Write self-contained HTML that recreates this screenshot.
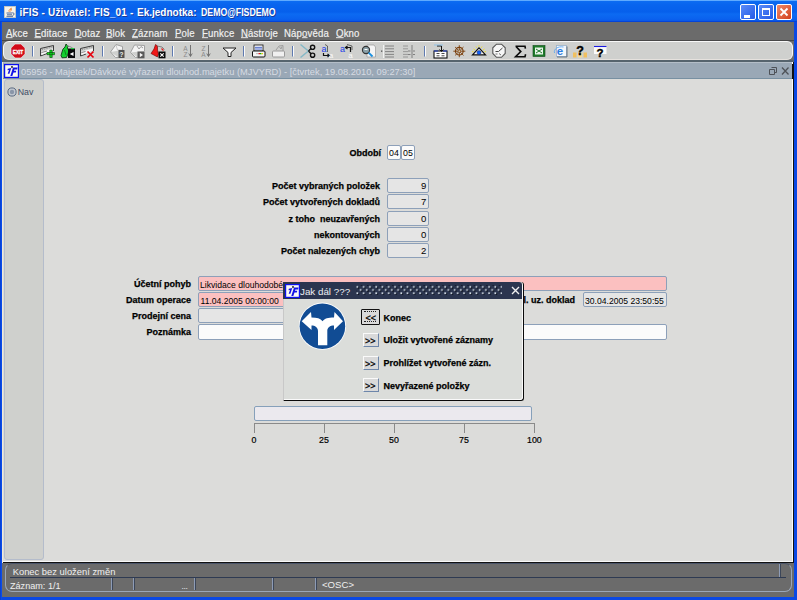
<!DOCTYPE html>
<html><head><meta charset="utf-8">
<style>
*{margin:0;padding:0;box-sizing:border-box}
html,body{width:797px;height:600px;overflow:hidden;background:linear-gradient(90deg,#0636b8 0,#0b4ef0 1px,#0a48e4 2px);font-family:"Liberation Sans",sans-serif}
.a{position:absolute}
.t{position:absolute;white-space:nowrap;line-height:1}
#title{left:0;top:0;width:797px;height:22px;background:linear-gradient(#5eaaff 0,#5eaaff 1px,#0c6cf2 1px,#0864ee 5px,#0660ec 12px,#0c6af2 14px,#0a62ee 19px,#0a5aea 20.5px,#0444d8 21px,#0444d8 22px)}
.ttext{left:19.5px;top:8px;font-size:10px;font-weight:bold;color:#fff;text-shadow:1px 1px 0 #1a3a9a}
.wb{position:absolute;top:4px;width:16px;height:16px;border:1px solid #fff;border-radius:2px}
#menubar{left:2px;top:22px;width:792px;height:19px;background:#6b6b6b}
.mi{position:absolute;top:28px;transform:scaleY(1.13);transform-origin:0 0;font-size:9.6px;color:#f2f2f2;-webkit-text-stroke:0.15px #f2f2f2;white-space:nowrap;line-height:1;letter-spacing:0.15px}
.mi u{text-decoration-thickness:1px;text-underline-offset:0px;text-decoration-color:#d8d8d8}
#tbback{left:2px;top:40px;width:792px;height:22px;background:linear-gradient(#484848 0,#484848 1px,#6b6b6b 1px,#6b6b6b 20px,#56646e 20px)}
#tb{left:3px;top:41px;width:790px;height:19px;background:#cfd0ce;border:1px solid #f8f8f8;border-bottom-color:#e6e2de;border-radius:6px}
#mdit{left:3px;top:62px;width:789px;height:17px;background:#9aa8b6;border-top:1px solid #b4bec8;border-bottom:1px solid #7890a2}
#mditr{left:792px;top:62px;width:1px;height:2px;background:#fff}
#mditext{left:21px;top:68px;font-size:9.3px;color:#d6dbe3}
#mdiwin{left:2px;top:62px;width:792px;height:501px;background:#111;border-left:1px solid #efe9d8}
#content{left:3px;top:79px;width:790px;height:483px;background:#dcdcda;border-right:1px solid #fbfbfb;border-bottom:1px solid #f8f8f8}
#nav{left:4px;top:79px;width:40px;height:481px;background:#cfd0cd;border:1px solid #b4bccb;border-radius:3px}
#status{left:2px;top:563px;width:792px;height:34px;background:#6b6b6b}
#sinner{left:5px;top:563px;width:787px;height:29px;border:1px solid #9aa6b8;border-top-color:#4a5468;border-radius:7px}
.lbl{position:absolute;font-size:9px;font-weight:bold;color:#000;-webkit-text-stroke:0.25px #000;white-space:nowrap;line-height:1}
.fld{position:absolute;border:1px solid #8da0b9;background:#e5e5e5;border-radius:2px}
.ft{position:absolute;font-size:8.6px;color:#000;white-space:nowrap;line-height:1}
.pink{background:#fbc0c0}
.white{background:#fbfbfb}
.btn{position:absolute;left:363px;width:16px;height:14px;background:#d9d9d9;border:1px solid;border-color:#fafafa #6d86aa #6d86aa #fafafa}
.bt{position:absolute;font-size:9px;font-weight:bold;color:#000;-webkit-text-stroke:0.25px #000;white-space:nowrap;line-height:1}
.sep{position:absolute;top:46px;width:2px;height:12px;border-left:1px solid #6e8ab8;border-right:1px solid #fff}
</style></head><body>
<div id="title" class="a"></div>
<svg class="a" style="left:4px;top:5.5px" width="12" height="12" viewBox="0 0 12 12"><rect x="0.3" y="0.3" width="11.4" height="11.4" fill="#f6f3ea" stroke="#cfc6b0" stroke-width="0.6"/><path d="M4.5,5.5 C4,4 6,3 7.5,1.5 C7.5,3 8.5,4 6.5,5.5 Z" fill="#f07a20"/><circle cx="6" cy="4.3" r="0.7" fill="#fff"/><path d="M2.5,7 h6 M3,8.8 h5 M2.5,10.3 h6.5" stroke="#3a5a90" stroke-width="0.9"/><path d="M8.6,6.5 C10.5,6.5 10.5,9.5 8.6,9.5" fill="none" stroke="#3a5a90" stroke-width="0.8"/></svg>
<div class="t ttext" style="letter-spacing:0.18px">iFIS - Uživatel: FIS_01 -</div><div class="t ttext" style="left:137px">Ek.jednotka:</div><div class="t ttext" style="left:200.5px;transform:scaleX(0.875);transform-origin:0 0">DEMO@FISDEMO</div>
<div class="wb" style="left:740px;background:linear-gradient(135deg,#5a8cf8,#2459e6)"><div class="a" style="left:3px;top:10px;width:6px;height:3px;background:#fff"></div></div>
<div class="wb" style="left:758px;background:linear-gradient(135deg,#5a8cf8,#2459e6)"><div class="a" style="left:3px;top:3px;width:8px;height:8px;border:1px solid #fff;border-top-width:2px"></div></div>
<div class="wb" style="left:776px;background:linear-gradient(135deg,#f08a6a,#d2401c)"><svg class="a" style="left:2px;top:2px" width="10" height="10"><path d="M1.5 1.5L8.5 8.5M8.5 1.5L1.5 8.5" stroke="#fff" stroke-width="1.8"/></svg></div>
<div id="menubar" class="a"></div>
<span class="mi" style="left:6px"><u>A</u>kce</span>
<span class="mi" style="left:34.5px"><u>E</u>ditace</span>
<span class="mi" style="left:74.5px"><u>D</u>otaz</span>
<span class="mi" style="left:106px"><u>B</u>lok</span>
<span class="mi" style="left:132px"><u>Z</u>áznam</span>
<span class="mi" style="left:175px"><u>P</u>ole</span>
<span class="mi" style="left:202px"><u>F</u>unkce</span>
<span class="mi" style="left:241px"><u>N</u>ástroje</span>
<span class="mi" style="left:284px">Náp<u>o</u>věda</span>
<span class="mi" style="left:336px"><u>O</u>kno</span>
<div id="tbback" class="a"></div>
<div id="tb" class="a"></div>
<svg class="a" style="left:0;top:0" width="797" height="62" viewBox="0 0 797 62">
<defs>
<g id="grid"><path d="M0.5,4.5 L13.5,0.5 L13.5,7 L0.5,11 Z" fill="#ececec" stroke="#4a4a4a" stroke-width="0.9"/><path d="M1,7.8 L13,4" stroke="#6a6a6a" stroke-width="0.8"/><path d="M4,3.5 L4,10 M8,2.3 L8,8.8" stroke="#9a9a9a" stroke-width="0.6"/></g>
<g id="sep"><rect x="0" y="0" width="1" height="10.5" fill="#5f7ab0"/><rect x="1" y="0" width="1" height="10.5" fill="#fafafa"/></g>
</defs>
<!-- EXIT -->
<polygon points="15.1,44 20.9,44 25,48.1 25,53.9 20.9,58 15.1,58 11,53.9 11,48.1" fill="#d20a18" stroke="#f0f4f4" stroke-width="0.6"/>
<text x="18" y="53.6" font-family="Liberation Sans" font-weight="bold" font-size="5.8" fill="#fff" stroke="#fff" stroke-width="0.3" text-anchor="middle" textLength="10.5" lengthAdjust="spacingAndGlyphs">EXIT</text>
<use href="#sep" x="32" y="46"/>
<!-- insert -->
<path d="M40.5,48.5 L53.5,45.5 L53.5,51 M40.5,48.5 L40.5,56 L47,53.5" fill="none" stroke="#3c3c3c" stroke-width="1"/>
<path d="M41.5,51.5 L53,48.5 L53,50.5 L41.5,55 Z" fill="#f6f6f6"/>
<path d="M41.5,49.8 L52.5,47" stroke="#8a8a8a" stroke-width="0.8" stroke-dasharray="1.5 1"/>
<path d="M41.5,52.5 L47,51" stroke="#666" stroke-width="0.8"/>
<path d="M47,52.5h7.5v2.2h-7.5z M49.8,50h2.4v7.5h-2.4z" fill="#12e020" stroke="#083a0c" stroke-width="0.6"/>
<!-- save green -->
<path d="M66,44 L68.2,46.5 L67.2,48 L69,50.5 L68,54 L66.5,57.5 L62,57.8 L61,55.5 L62,52 L63,49 L65,47 Z" fill="#14d030" stroke="#062a0a" stroke-width="0.8"/>
<path d="M64.5,50 L66,55" stroke="#0a8a1a" stroke-width="1"/>
<path d="M67,45.5 L71,47 L73,48.5" fill="none" stroke="#808080" stroke-width="0.8"/>
<rect x="68" y="48.5" width="7" height="9.5" fill="#0a0a0a"/>
<path d="M71,48.6h3" stroke="#20d040" stroke-width="1.2"/>
<path d="M69.8,54 L73.5,52 L73.5,56 Z" fill="#fff"/>
<!-- delete -->
<path d="M80.5,48.5 L93.5,45.5 L93.5,51 M80.5,48.5 L80.5,56 L86,54" fill="none" stroke="#3c3c3c" stroke-width="1"/>
<path d="M81.5,51.5 L93,48.5 L93,50.5 L81.5,55 Z" fill="#f6f6f6"/>
<path d="M81.5,49.8 L92.5,47" stroke="#8a8a8a" stroke-width="0.8" stroke-dasharray="1.5 1"/>
<path d="M81.5,52.5 L85.5,51.5" stroke="#666" stroke-width="0.8"/>
<path d="M87.5,51.5 L93.5,57.5 M93.5,51.5 L87.5,57.5" stroke="#e8000c" stroke-width="1.7"/>
<use href="#sep" x="102" y="46"/>
<!-- query gray -->
<path d="M110.5,52 L116,44.5 L122.5,46.5 L122.5,50 M110.5,52 L115.5,57.5 L118.5,57.5" fill="#f4f4f4" stroke="#9a9a9a" stroke-width="0.9"/>
<path d="M116,45 L117.5,50 L122,50" fill="none" stroke="#b8b8b8" stroke-width="0.7"/>
<rect x="118.5" y="50" width="6" height="8" fill="#505050"/>
<text x="121.5" y="57" font-family="Liberation Sans" font-weight="bold" font-size="6.5" fill="#f0f0f0" text-anchor="middle">?</text>
<!-- exec gray -->
<path d="M130.5,52.5 L134.5,45 L144.5,45.5 L144.5,51 M130.5,52.5 L135.5,57.5 L137.5,57.5" fill="#f4f4f4" stroke="#9a9a9a" stroke-width="0.9"/>
<path d="M137,46 L139,49 L141,46.5 L143,48" fill="none" stroke="#888" stroke-width="0.8"/>
<rect x="137.5" y="51.5" width="7" height="6.8" fill="#5a5a5a"/>
<path d="M139.8,52.8 L143,55 L139.8,57.2 Z" fill="#f6f6f6"/>
<!-- cancel red -->
<path d="M151,53.5 L154,49 L155.5,44.5 L157.5,46 L157.5,50 L158.5,54 L157.5,57 Z" fill="#f01818" stroke="#600" stroke-width="0.6"/>
<path d="M157,46 L162,47 L164.5,49.5" fill="none" stroke="#707070" stroke-width="0.8"/>
<path d="M161.5,48.5 L163.5,50.5" stroke="#e02020" stroke-width="1.2"/>
<rect x="158.5" y="51.5" width="7" height="6.8" fill="#080808"/>
<path d="M160.3,53.3 L163.7,56.7 M163.7,53.3 L160.3,56.7" stroke="#fff" stroke-width="1.1"/>
<use href="#sep" x="172" y="46"/>
<!-- sort -->
<text x="185.5" y="50.5" font-family="Liberation Sans" font-size="6.5" fill="#8a8a8a" text-anchor="middle">A</text>
<text x="185.5" y="57" font-family="Liberation Sans" font-size="6.5" fill="#8a8a8a" text-anchor="middle">Z</text>
<path d="M190.5,45 L190.5,56 M188.8,53.5 L190.5,56.5 L192.2,53.5" fill="none" stroke="#6a6a6a" stroke-width="0.9"/>
<text x="203.5" y="50.5" font-family="Liberation Sans" font-size="6.5" fill="#8a8a8a" text-anchor="middle">Z</text>
<text x="203.5" y="57" font-family="Liberation Sans" font-size="6.5" fill="#8a8a8a" text-anchor="middle">A</text>
<path d="M208.5,45 L208.5,56 M206.8,53.5 L208.5,56.5 L210.2,53.5" fill="none" stroke="#6a6a6a" stroke-width="0.9"/>
<!-- filter -->
<path d="M223,48 L236,48 L231,52.5 L231,56.5 L228,56.5 L228,52.5 Z" fill="#fafafa" stroke="#222" stroke-width="1"/>
<use href="#sep" x="243" y="46"/>
<!-- printer -->
<rect x="254" y="45" width="9" height="6" fill="#fff" stroke="#222" stroke-width="0.9"/>
<path d="M255,47.3h7 M255,49h7" stroke="#3050c0" stroke-width="0.9"/>
<rect x="252.5" y="51" width="12.5" height="6" rx="1" fill="#f4f4f4" stroke="#111" stroke-width="1"/>
<path d="M256,53.6h2.5" stroke="#bbb" stroke-width="1.1"/><path d="M258.5,53.6h1.5" stroke="#e01818" stroke-width="1.1"/><path d="M260,53.6h1.5" stroke="#10b010" stroke-width="1.1"/><path d="M261.5,53.6h1.5" stroke="#f0d000" stroke-width="1.1"/>
<!-- gray printer -->
<path d="M276,50 L279,46 L283,45.5 L283,51 M279.5,47 L281,49 L282,46.5" fill="none" stroke="#9a9a9a" stroke-width="0.9"/>
<rect x="272.5" y="51" width="12" height="6" rx="1" fill="#f0f0f0" stroke="#9a9a9a" stroke-width="1"/>
<use href="#sep" x="292" y="46"/>
<!-- scissors -->
<path d="M300.5,44.5 L309,51.5 M300.5,57.5 L309,50.5" stroke="#84b8c6" stroke-width="1.5"/>
<path d="M308.5,51 L311,48.5 M308.5,51 L311,53.8" stroke="#111" stroke-width="1.3"/>
<circle cx="312.6" cy="47.3" r="2.1" fill="none" stroke="#111" stroke-width="1.4"/>
<circle cx="312.6" cy="55.2" r="2.1" fill="none" stroke="#111" stroke-width="1.4"/>
<!-- copy -->
<text x="324" y="51.5" font-family="Liberation Sans" font-size="9" fill="#1a3ce8" text-anchor="middle">a</text>
<path d="M325,44.5 L327.5,46 L327.5,52" fill="none" stroke="#333" stroke-width="0.7"/>
<path d="M323.5,53 L323.5,55.5 L329,55.5 M327.5,54 L329.5,55.5 L327.5,57" fill="none" stroke="#111" stroke-width="1.2"/>
<text x="331" y="58" font-family="Liberation Sans" font-size="8" fill="#fafafa" text-anchor="middle">a</text>
<!-- paste -->
<text x="342.5" y="51.5" font-family="Liberation Sans" font-size="9" fill="#1a3ce8" text-anchor="middle">a</text>
<path d="M345.5,47.5 L350.5,47.5 L350.5,52 M347.5,46 L345.5,47.5 L347.5,49" fill="none" stroke="#111" stroke-width="1.2"/>
<path d="M347,44.5 L352,46 L352,50" fill="none" stroke="#333" stroke-width="0.7"/>
<text x="350.5" y="58" font-family="Liberation Sans" font-size="8" fill="#fafafa" text-anchor="middle">a</text>
<!-- search -->
<path d="M367,45 L374,45 L375.5,47 L375.5,57 L367,57 Z" fill="#f4f4f4" stroke="#999" stroke-width="0.7"/>
<circle cx="366" cy="50" r="3.6" fill="#8aa0a8" stroke="#333" stroke-width="1.1"/>
<path d="M364.5,49.5 L367.5,49.5" stroke="#fff" stroke-width="1"/>
<path d="M368.6,52.6 L372.5,56.5" stroke="#1890e0" stroke-width="1.8"/>
<!-- list -->
<path d="M385,46h9 M385,48.8h9 M385,51.6h9 M385,54.4h9 M385,57h9" stroke="#7a7a7a" stroke-width="0.9"/>
<path d="M383.5,45 L383.5,58" stroke="#fafafa" stroke-width="0.8"/>
<rect x="381" y="50.5" width="1.3" height="1.3" fill="#555"/>
<!-- list2 -->
<path d="M403,46h5 M403,48.8h5 M403,51.6h5 M403,54.4h5 M403,57h5" stroke="#8a8a8a" stroke-width="0.8"/>
<path d="M412,45 L412,58" stroke="#777" stroke-width="0.9"/>
<path d="M408,51l2.5,0 M408,54.5l2.5,0 M413,51h2 M413,54.5h2" stroke="#777" stroke-width="0.9"/>
<use href="#sep" x="424" y="46"/>
<!-- 433 icon -->
<rect x="434" y="51" width="13" height="7" fill="#fff" stroke="#111" stroke-width="1.1"/>
<path d="M436.5,53.5h3 M441.5,53.5h3 M436.5,55.8h3 M441.5,55.8h3" stroke="#333" stroke-width="0.9"/>
<path d="M437,46h4.5v5 M439.5,49.5 L441.5,51.5 L443.5,49.5" fill="none" stroke="#111" stroke-width="1"/>
<path d="M434,45h9" stroke="#80c0f0" stroke-width="0.8"/>
<path d="M434,51h4 M443,51h4" stroke="#2040d0" stroke-width="1"/>
<!-- wheel -->
<circle cx="459.3" cy="51.2" r="3.8" fill="none" stroke="#7a3e0a" stroke-width="1.2"/>
<path d="M453.3,51.2h12 M459.3,45.2v12 M455.1,47 L463.5,55.4 M463.5,47 L455.1,55.4" stroke="#7a3e0a" stroke-width="0.9"/>
<circle cx="459.3" cy="51.2" r="1.3" fill="#d8c8a8" stroke="#7a3e0a" stroke-width="0.6"/>
<!-- eye -->
<path d="M472.5,54.8 L479,47.8 L485.5,54.8 Z" fill="#f4f4f4" stroke="#111" stroke-width="1.2"/>
<circle cx="479" cy="52.6" r="2" fill="#1060f8" stroke="#102060" stroke-width="0.5"/>
<path d="M473.5,49 L475,50 M476,46.5 L476.8,47.8 M479,45 L479,46.5 M482,46.5 L481.2,47.8 M484.5,49 L483,50 M472,51.5 L473.5,51.8 M486,51.5 L484.5,51.8" stroke="#f2e020" stroke-width="0.9"/>
<!-- clock -->
<polygon points="496.5,44.2 501.5,44.2 505.2,47.8 505.2,53.5 501.5,57.3 496.5,57.3 492.8,53.5 492.8,47.8" fill="#f6f6f6" stroke="#555" stroke-width="1.1"/>
<path d="M495.5,51.5 L498.5,51.5 L502.5,48" fill="none" stroke="#444" stroke-width="1"/>
<path d="M495.5,54 L497.5,54 M499,53.5 L501,55" stroke="#666" stroke-width="0.9"/>
<!-- sigma -->
<path d="M515.5,46.3 L525,46.3 L525.4,48.6 M516,46.5 L520.8,51.6 L515.6,56.7 L525,56.7 L525.6,54.2" fill="none" stroke="#0a0a0a" stroke-width="1.6" stroke-linejoin="miter"/>
<!-- excel -->
<rect x="533" y="45.5" width="12" height="11" fill="#1e7a2a" stroke="#0e4a18" stroke-width="0.6"/>
<rect x="535" y="47.5" width="8" height="7" fill="#e8f4e8"/>
<path d="M536,49 L542,53 M542,49 L536,53" stroke="#1e7a2a" stroke-width="1"/>
<!-- IE -->
<rect x="556.5" y="45.5" width="10" height="11" fill="#f2f6fc" stroke="#9ab0c8" stroke-width="0.8"/>
<path d="M567,46.5 L567,57 L557,57" fill="none" stroke="#506070" stroke-width="0.8"/>
<text x="560" y="55.3" font-family="Liberation Sans" font-weight="bold" font-size="11.5" fill="#2a7ce0" text-anchor="middle">e</text>
<path d="M554.5,53 C553.5,49 558,46 563.5,47" fill="none" stroke="#60a8f0" stroke-width="0.9"/>
<!-- help1 -->
<rect x="573" y="52.5" width="3.5" height="5" fill="#f0c060"/><rect x="578" y="52.5" width="4" height="5" fill="#f8d890"/><rect x="583.5" y="52.5" width="3.5" height="5" fill="#f0c060"/>
<text x="580" y="55" font-family="Liberation Sans" font-weight="bold" font-size="12.5" fill="#000" stroke="#000" stroke-width="0.4" text-anchor="middle">?</text>
<!-- help2 -->
<rect x="594" y="46" width="12.5" height="8" fill="#fafafa"/>
<path d="M594,46.5h12.5" stroke="#1a1ae0" stroke-width="1.1"/>
<text x="600" y="57" font-family="Liberation Sans" font-weight="bold" font-size="11.5" fill="#000" stroke="#000" stroke-width="0.4" text-anchor="middle">?</text>
</svg>

<div id="mdiwin" class="a"></div>
<div id="mdit" class="a"></div><div id="mditr" class="a"></div><svg class="a" style="left:766px;top:64px" width="26" height="14"><path d="M3.5,5.5h5v5h-5z M5.5,3.5h5v5h-2" fill="none" stroke="#4e5258" stroke-width="1"/><path d="M16,3.5 L22.5,10.5 M22.5,3.5 L16,10.5" stroke="#4e5258" stroke-width="1.3"/></svg>
<div class="a" style="left:4px;top:64px"><svg width="15" height="14" viewBox="0 0 15 14" style="display:block"><rect x="0.6" y="0.6" width="13.8" height="12.8" fill="#fbfbf4" stroke="#0c10f0" stroke-width="1.2"/><path d="M3.8,4.8 L7.3,4 L5.4,9.8 L3.7,9.8 L5,6.1 L3.5,6.3 Z" fill="#1414e6"/><circle cx="8" cy="3" r="0.9" fill="#111"/><path d="M9,3.6 L13.6,3.6 L13.1,5.4 L10.4,5.4 L10,6.8 L12.3,6.8 L11.8,8.5 L9.5,8.5 L8.3,11.9 L6.3,11.9 Z" fill="#1414e6"/></svg></div>
<div id="mditext" class="t">05956 - Majetek/Dávkové vyřazeni dlouhod.majetku (MJVYRD) - [čtvrtek, 19.08.2010, 09:27:30]</div>
<div id="content" class="a"></div>
<div id="nav" class="a"></div>
<svg class="a" style="left:6.5px;top:86.5px" width="10" height="10"><circle cx="5" cy="5" r="4.1" fill="#c2c8d0" stroke="#5a6a80" stroke-width="1"/><circle cx="5" cy="5" r="2.2" fill="#8a96a8"/></svg>
<div class="t" style="left:17.7px;top:88px;font-size:8.8px;color:#3e4c64">Nav</div>

<!-- form -->
<div class="lbl" style="left:349.5px;top:148.5px">Období</div>
<div class="fld white" style="left:387px;top:145px;width:14px;height:15px"></div>
<div class="fld white" style="left:401px;top:145px;width:14px;height:15px"></div>
<div class="ft" style="left:389px;top:149px;font-size:8.8px">04</div>
<div class="ft" style="left:403px;top:149px;font-size:8.8px">05</div>

<div class="lbl" style="right:417px;top:181.5px">Počet vybraných položek</div>
<div class="lbl" style="right:417px;top:197.5px">Počet vytvořených dokladů</div>
<div class="lbl" style="right:417px;top:214.5px">z toho&nbsp; neuzavřených</div>
<div class="lbl" style="right:417px;top:230.5px">nekontovaných</div>
<div class="lbl" style="right:417px;top:246.5px">Počet nalezených chyb</div>
<div class="fld" style="left:387px;top:178px;width:42px;height:15px"></div>
<div class="fld" style="left:387px;top:194px;width:42px;height:15px"></div>
<div class="fld" style="left:387px;top:211px;width:42px;height:15px"></div>
<div class="fld" style="left:387px;top:227px;width:42px;height:15px"></div>
<div class="fld" style="left:387px;top:243px;width:42px;height:15px"></div>
<div class="ft" style="left:421px;top:181px;font-size:9.6px">9</div>
<div class="ft" style="left:421px;top:197px;font-size:9.6px">7</div>
<div class="ft" style="left:421px;top:214px;font-size:9.6px">0</div>
<div class="ft" style="left:421px;top:230px;font-size:9.6px">0</div>
<div class="ft" style="left:421px;top:246px;font-size:9.6px">2</div>

<div class="lbl" style="right:606px;top:280px">Účetní pohyb</div>
<div class="lbl" style="right:606px;top:296px">Datum operace</div>
<div class="lbl" style="right:606px;top:312px">Prodejní cena</div>
<div class="lbl" style="right:606px;top:328px">Poznámka</div>
<div class="fld pink" style="left:198px;top:276px;width:469px;height:15px"></div>
<div class="fld pink" style="left:198px;top:292px;width:90px;height:15px"></div>
<div class="fld" style="left:198px;top:308px;width:90px;height:15px"></div>
<div class="fld white" style="left:198px;top:324px;width:469px;height:16px"></div>
<div class="ft" style="left:200px;top:281px">Likvidace dlouhodobé</div>
<div class="ft" style="left:200.5px;top:296.5px">11.04.2005 00:00:00</div>
<div class="lbl" style="left:518px;top:296px">pl. uz. doklad</div>
<div class="fld" style="left:583px;top:292px;width:84px;height:15px"></div>
<div class="ft" style="left:585px;top:297px">30.04.2005 23:50:55</div>

<!-- progress -->
<div class="fld" style="left:254px;top:406px;width:278px;height:15px;background:#ebe9ee;border-color:#86a0ba"></div>
<div class="a" style="left:254px;top:423px;width:281px;height:1px;background:#8a8a8a"></div>
<div class="a" style="left:254px;top:423px;width:1px;height:10px;background:#8a8a8a"></div>
<div class="a" style="left:324px;top:423px;width:1px;height:10px;background:#8a8a8a"></div>
<div class="a" style="left:394px;top:423px;width:1px;height:10px;background:#8a8a8a"></div>
<div class="a" style="left:464px;top:423px;width:1px;height:10px;background:#8a8a8a"></div>
<div class="a" style="left:534px;top:423px;width:1px;height:10px;background:#8a8a8a"></div>
<div class="ft" style="left:251.5px;top:435.5px;font-size:8.8px;-webkit-text-stroke:0.2px #000">0</div>
<div class="ft" style="left:319px;top:435.5px;font-size:8.8px;-webkit-text-stroke:0.2px #000">25</div>
<div class="ft" style="left:389px;top:435.5px;font-size:8.8px;-webkit-text-stroke:0.2px #000">50</div>
<div class="ft" style="left:459px;top:435.5px;font-size:8.8px;-webkit-text-stroke:0.2px #000">75</div>
<div class="ft" style="left:527px;top:435.5px;font-size:8.8px;-webkit-text-stroke:0.2px #000">100</div>

<!-- dialog -->
<div class="a" style="left:283px;top:282px;width:241px;height:119px;background:#dbddda;border-left:1px solid #c8c8c8;border-right:1px solid #0a0a0a;border-bottom:1px solid #0a0a0a;border-radius:0 3px 3px 0;box-shadow:inset -1px -1px 0 #fafafa"></div>
<div class="a" style="left:283px;top:282px;width:239px;height:17px;background:#2b354f;border-radius:0 3px 0 0"></div>
<div class="a" style="left:284.5px;top:283.5px"><svg width="15" height="14" viewBox="0 0 15 14" style="display:block"><rect x="0.6" y="0.6" width="13.8" height="12.8" fill="#fbfbf4" stroke="#0c10f0" stroke-width="1.2"/><path d="M3.8,4.8 L7.3,4 L5.4,9.8 L3.7,9.8 L5,6.1 L3.5,6.3 Z" fill="#1414e6"/><circle cx="8" cy="3" r="0.9" fill="#111"/><path d="M9,3.6 L13.6,3.6 L13.1,5.4 L10.4,5.4 L10,6.8 L12.3,6.8 L11.8,8.5 L9.5,8.5 L8.3,11.9 L6.3,11.9 Z" fill="#1414e6"/></svg></div>
<div class="t" style="left:300px;top:286.5px;font-size:9.8px;color:#eceef2">Jak dál ???</div>
<svg class="a" style="left:354px;top:284px" width="150" height="13"><defs><pattern id="dots" patternUnits="userSpaceOnUse" width="6.27" height="6.3" x="2.3" y="1.8"><rect x="1.3" y="1.3" width="1.6" height="1.6" fill="#050a14"/><rect x="0.3" y="0.3" width="1.6" height="1.6" fill="#dfe8f0"/><rect x="4.4" y="4.4" width="1.6" height="1.6" fill="#050a14"/><rect x="3.4" y="3.4" width="1.6" height="1.6" fill="#dfe8f0"/></pattern></defs><rect x="2" y="1" width="146" height="9.8" fill="url(#dots)"/></svg>
<svg class="a" style="left:511px;top:286px" width="9" height="9"><path d="M1 1L8 8M8 1L1 8" stroke="#f0f0f0" stroke-width="1.4"/></svg>
<svg class="a" style="left:298px;top:302px" width="49" height="49" viewBox="0 0 49 49">
<circle cx="24.4" cy="24.2" r="23.6" fill="#fff"/>
<circle cx="24.4" cy="24.2" r="22.8" fill="#114c94"/>
<path d="M3.7,19.3 L13,10 L13.5,15.5 C19,15.5 22.5,16.5 24.6,19.2 C26.7,16.5 30,15.5 36,15.5 L36.5,10 L45,19.3 L36,28 L36,23.5 C32,23.5 29.3,25.5 29.3,29 L29.3,43.2 L20,43.2 L20,29 C20,25.5 17,23.5 13.5,23.5 L13.5,28 Z" fill="#fff"/>
</svg>
<div class="a" style="left:361px;top:309px;width:19px;height:16px;background:#dadada;border:1px solid #111;border-radius:1px"></div>
<div class="t" style="left:365.5px;top:313.5px;font-size:9px;color:#000;-webkit-text-stroke:0.3px #000">&lt;&lt;</div><div class="a" style="left:364px;top:311px;width:12px;height:0;border-top:1px dotted #222"></div><div class="a" style="left:364px;top:321px;width:12px;height:0;border-top:1px dotted #222"></div>
<div class="btn" style="top:333px"></div>
<div class="btn" style="top:356px"></div>
<div class="btn" style="top:378px"></div>
<div class="t" style="left:365px;top:336.5px;font-size:9px;color:#000;-webkit-text-stroke:0.3px #000">&gt;&gt;</div>
<div class="t" style="left:365px;top:359.5px;font-size:9px;color:#000;-webkit-text-stroke:0.3px #000">&gt;&gt;</div>
<div class="t" style="left:365px;top:381.5px;font-size:9px;color:#000;-webkit-text-stroke:0.3px #000">&gt;&gt;</div>
<div class="bt" style="left:383.5px;top:314px">Konec</div>
<div class="bt" style="left:383.5px;top:336px">Uložit vytvořené záznamy</div>
<div class="bt" style="left:383.5px;top:359px">Prohlížet vytvořené zázn.</div>
<div class="bt" style="left:383.5px;top:382px">Nevyřazené položky</div>

<!-- status -->
<div id="status" class="a"></div>
<div id="sinner" class="a"></div>
<div class="a" style="left:10px;top:577px;width:776px;height:1px;background:#2e3a52"></div>
<div class="t" style="left:12.7px;top:567px;font-size:9.4px;color:#f0f0f0">Konec bez uložení změn</div>
<div class="t" style="left:10px;top:581.5px;font-size:9.1px;color:#f0f0f0">Záznam: 1/1</div>
<div class="t" style="left:322px;top:580px;font-size:9.6px;color:#f0f0f0">&lt;OSC&gt;</div>
<div class="a" style="left:111px;top:578px;width:2px;height:12px;border-left:1px solid #8e9cb6;border-right:1px solid #3c4658"></div><div class="a" style="left:133px;top:578px;width:2px;height:12px;border-left:1px solid #8e9cb6;border-right:1px solid #3c4658"></div><div class="a" style="left:194px;top:578px;width:2px;height:12px;border-left:1px solid #8e9cb6;border-right:1px solid #3c4658"></div><div class="a" style="left:272px;top:578px;width:2px;height:12px;border-left:1px solid #8e9cb6;border-right:1px solid #3c4658"></div><div class="a" style="left:315px;top:578px;width:2px;height:12px;border-left:1px solid #8e9cb6;border-right:1px solid #3c4658"></div><div class="a" style="left:779px;top:564px;width:2px;height:13px;border-left:1px solid #8e9cb6;border-right:1px solid #3c4658"></div><div class="t" style="left:181.5px;top:582px;font-size:8.5px;color:#e8e8e8;letter-spacing:-0.3px">...</div>
</body></html>
